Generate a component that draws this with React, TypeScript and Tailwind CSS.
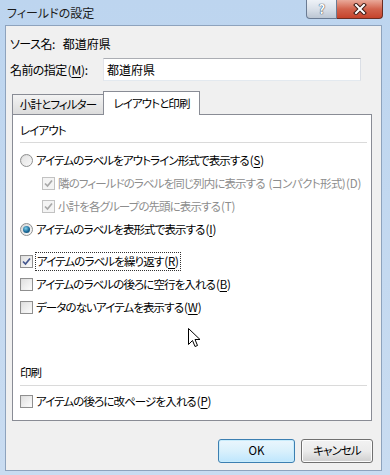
import React from "react";

const FONT = "font-['Meiryo_UI','Noto_Sans_CJK_JP',sans-serif] [font-feature-settings:'palt']";

function CheckBox({ checked, disabled }: { checked?: boolean; disabled?: boolean }) {
    return (
        <span
            className={`w-[13px] h-[13px] shrink-0 flex items-center justify-center border ${
                disabled ? "border-[#c2c2c2] bg-[#f4f4f4]" : "border-[#8f8f8f] bg-gradient-to-br from-[#dcdcdc] to-[#fbfbfb]"
            }`}
        >
            <span className={`w-[9px] h-[9px] flex items-center justify-center ${disabled ? "" : "bg-gradient-to-br from-[#e2e2e2] to-[#fafafa]"}`}>
                {checked && (
                    <svg width="11" height="11" viewBox="0 0 11 11" className="-m-[1px]">
                        <path
                            d="M2 5.5 L4.5 8 L9 2.5"
                            fill="none"
                            stroke={disabled ? "#a8a8a8" : "#44578e"}
                            strokeWidth="1.7"
                        />
                    </svg>
                )}
            </span>
        </span>
    );
}

function Radio({ checked }: { checked?: boolean }) {
    return (
        <span className="w-[13px] h-[13px] shrink-0 rounded-full border border-[#8e8f8f] bg-gradient-to-br from-[#d6d6d6] to-[#fcfcfc] flex items-center justify-center">
            {checked ? (
                <span className="w-[7px] h-[7px] rounded-full bg-[radial-gradient(circle_at_40%_35%,#7fd0ec,#1a6a99_55%,#14405e)]" />
            ) : (
                <span className="w-[9px] h-[9px] rounded-full bg-gradient-to-br from-[#e4e4e4] to-[#f6f6f6]" />
            )}
        </span>
    );
}

// access key suffix like "(S)" with normal letter spacing
function Key({ k, plain }: { k: string; plain?: boolean }) {
    return (
        <span className="tracking-[-0.2px] ml-[1px]">
            ({plain ? k : <span className="underline underline-offset-2">{k}</span>})
        </span>
    );
}

function Row({ children, indent }: { children: React.ReactNode; indent?: boolean }) {
    return <div className={`h-[23px] flex items-center gap-[3px] whitespace-nowrap ${indent ? "pl-[22px]" : ""}`}>{children}</div>;
}

export default function App() {
    return (
        <div className={`w-[390px] h-[475px] flex flex-col bg-gradient-to-b from-[#bdd5ef] to-[#c9dcf1] text-[11.5px] tracking-[-0.9px] text-black ${FONT}`}>
            {/* title bar */}
            <div className="h-[25px] flex items-start justify-between shrink-0">
                <span className="pl-[7px] pt-[4px] text-[12px] tracking-normal text-[#1b1b1b]">フィールドの設定</span>
                <div className="flex mr-[7px]">
                    <div className="w-[31px] h-[19px] rounded-bl-[4px] border border-t-0 border-[#6a7b93] bg-gradient-to-b from-[#eef2f7] via-[#d9e0e9] to-[#bcc6d3] flex items-center justify-center">
                        <span className="text-[13px] font-bold text-white [text-shadow:0_0_1px_#27384f,0_0_1px_#27384f]">?</span>
                    </div>
                    <div className="w-[46px] h-[19px] rounded-br-[4px] border border-l-0 border-t-0 border-[#6b2d22] bg-gradient-to-b from-[#e9a99a] via-[#d2634d] to-[#c5432b] flex items-center justify-center">
                        <svg width="14" height="12" viewBox="0 0 14 12">
                            <path d="M3 2 L11 10 M11 2 L3 10" stroke="#3d1a14" strokeWidth="4" strokeLinecap="square" />
                            <path d="M3 2 L11 10 M11 2 L3 10" stroke="#ffffff" strokeWidth="2" strokeLinecap="square" />
                        </svg>
                    </div>
                </div>
            </div>

            {/* client */}
            <div className="flex-1 ml-[5px] mr-[8px] mb-[4px] bg-[#f0f0f0] border border-[#8ea3bd] flex flex-col">
                <div className="pt-[9px] h-[26px] leading-[17px] flex pl-[4px] text-[12px] tracking-[-0.5px]">
                    <span>ソース名:</span>
                    <span className="ml-[8px] tracking-normal">都道府県</span>
                </div>
                <div className="mt-[6px] flex items-center pl-[4px]">
                    <span className="w-[93px] text-[12px] tracking-[-0.6px]">
                        名前の指定<Key k="M" />:
                    </span>
                    <div className="w-[258px] h-[23px] border border-[#abadb3] border-l-[#e2e3ea] border-b-[#e3e9ef] border-r-[#dbdfe6] bg-white flex items-center pl-[3px] text-[12px] tracking-normal">
                        都道府県
                    </div>
                </div>

                {/* tabs */}
                <div className="mt-[10px] ml-[6px] mr-[9px] flex items-end h-[23px]">
                    <div className="w-[91px] h-[20px] border border-b-0 border-[#898c95] border-r-0 bg-gradient-to-b from-[#f3f3f3] to-[#dcdcdc] flex items-center justify-center pt-[1px]">
                        小計とフィルター
                    </div>
                    <div className="w-[97px] h-[24px] -mb-[1px] relative z-10 border border-b-0 border-[#898c95] bg-white flex items-center justify-center">
                        レイアウトと印刷
                    </div>
                </div>
                <div className="ml-[6px] mr-[9px] h-[307px] border border-[#898c95] bg-white pl-[7px] pr-[4px] pt-[8px] flex flex-col relative">
                    <div className="h-[16px] flex items-center">レイアウト</div>
                    <div className="mt-[3px] h-px bg-[#dadada]" />
                    <div className="mt-[6px] flex flex-col">
                        <Row>
                            <Radio />
                            <span>
                                アイテムのラベルをアウトライン形式で表示する<Key k="S" />
                            </span>
                        </Row>
                        <Row indent>
                            <CheckBox checked disabled />
                            <span className="text-[#8d8d8d]">
                                隣のフィールドのラベルを同じ列内に表示する
                                <span className="ml-[4px] tracking-[-0.6px]">(コンパクト形式)</span>
                                <Key k="D" plain />
                            </span>
                        </Row>
                        <Row indent>
                            <CheckBox checked disabled />
                            <span className="text-[#8d8d8d]">
                                小計を各グループの先頭に表示する<Key k="T" plain />
                            </span>
                        </Row>
                        <Row>
                            <Radio checked />
                            <span>
                                アイテムのラベルを表形式で表示する<Key k="I" />
                            </span>
                        </Row>
                    </div>
                    <div className="mt-[9px] flex flex-col">
                        <Row>
                            <CheckBox checked />
                            <span className="outline-1 outline-dotted outline-[#333] px-[1px] leading-[17px]">
                                アイテムのラベルを繰り返す<Key k="R" />
                            </span>
                        </Row>
                        <Row>
                            <CheckBox />
                            <span>
                                アイテムのラベルの後ろに空行を入れる<Key k="B" />
                            </span>
                        </Row>
                        <Row>
                            <CheckBox />
                            <span>
                                データのないアイテムを表示する<Key k="W" />
                            </span>
                        </Row>
                    </div>
                    <div className="mt-[46px] h-[16px] flex items-center">印刷</div>
                    <div className="mt-[4px] h-px bg-[#dadada]" />
                    <div className="mt-[4px]">
                        <Row>
                            <CheckBox />
                            <span>
                                アイテムの後ろに改ページを入れる<Key k="P" />
                            </span>
                        </Row>
                    </div>

                    {/* mouse pointer */}
                    <svg className="absolute left-[175px] top-[213px]" width="13" height="21" viewBox="0 0 13 21">
                        <path
                            d="M0.5 0.5 L0.5 16.5 L4.5 12.5 L7 18.5 L9.5 17.5 L7 11.5 L12 11.5 Z"
                            fill="#ffffff"
                            stroke="#000000"
                            strokeWidth="1"
                            strokeLinejoin="miter"
                        />
                    </svg>
                </div>

                {/* buttons */}
                <div className="mt-[18px] flex justify-end gap-[6px] pr-[8px]">
                    <button className="w-[77px] h-[24px] rounded-[3px] border border-[#3c7fb1] bg-gradient-to-b from-[#eaf6fd] via-[#d9f0fc] to-[#bee6fd] shadow-[inset_0_0_0_1px_#c8ecfc] tracking-normal">
                        OK
                    </button>
                    <button className="w-[72px] h-[24px] rounded-[3px] border border-[#707070] bg-gradient-to-b from-[#f2f2f2] via-[#ebebeb] to-[#cfcfcf] shadow-[inset_0_0_0_1px_#fcfcfc]">
                        キャンセル
                    </button>
                </div>
            </div>
        </div>
    );
}
